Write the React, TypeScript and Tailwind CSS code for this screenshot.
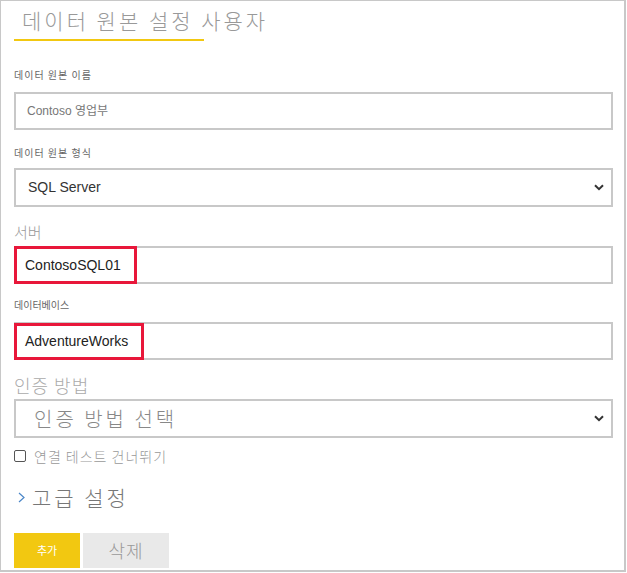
import React from 'react';

const ko = { fontFamily: '"Noto Sans CJK KR", "Noto Sans", sans-serif' };
const latin = { fontFamily: '"Liberation Sans", "Noto Sans CJK KR", sans-serif' };

function Chevron() {
  return (
    <svg width="10" height="7" viewBox="0 0 10 7" className="shrink-0">
      <path d="M1 1.2 L5 5.2 L9 1.2" fill="none" stroke="#333" strokeWidth="2" />
    </svg>
  );
}

export default function App() {
  return (
    <div className="w-[627px] h-[573px] bg-white">
      <div className="w-[626px] h-[572px] border border-[#c8c8c8] border-r-2 border-b-2 pl-[13px] pr-[11px]" style={ko}>
        {/* Title */}
        <div className="h-[38px] pl-[8px] pt-[3px] text-[21px] leading-[32px] tracking-[3px] text-[#999] font-light">
          데이터 원본 설정 사용자
        </div>
        <div className="h-[2px] w-[190px] bg-[#f2c811]"></div>

        {/* Data source name */}
        <div className="pt-[28px] mb-[11px] text-[10px] leading-[12px] tracking-[1px] text-[#666]">데이터 원본 이름</div>
        <div className="h-[38px] border-2 border-[#c8c8c8] flex items-center pl-[11px] text-[12px] text-[#777]" style={latin}>
          Contoso 영업부
        </div>

        {/* Data source type */}
        <div className="pt-[17px] mb-[9px] text-[10px] leading-[12px] tracking-[1px] text-[#666]">데이터 원본 형식</div>
        <div className="h-[39px] border-2 border-[#c8c8c8] flex items-center justify-between pl-[12px] pr-[7px] text-[14px] text-[#333]" style={latin}>
          <span>SQL Server</span>
          <Chevron />
        </div>

        {/* Server */}
        <div className="pt-[15px] mb-[4px] text-[15px] leading-[20px] text-[#999] font-light">서버</div>
        <div className="relative h-[38px] border-2 border-[#c8c8c8] flex items-center pl-[9px] text-[14px] text-[#222]" style={latin}>
          ContosoSQL01
          <div className="absolute left-[-2px] top-[-2px] w-[123px] h-[38px] border-[3px] border-[#e8173a]"></div>
        </div>

        {/* Database */}
        <div className="pt-[15px] mb-[11px] text-[10px] leading-[12px] text-[#666]">데이터베이스</div>
        <div className="relative h-[38px] border-2 border-[#c8c8c8] flex items-center pl-[9px] text-[14px] text-[#222]" style={latin}>
          AdventureWorks
          <div className="absolute left-[-2px] top-[-1px] w-[130px] h-[37px] border-[3px] border-[#e8173a]"></div>
        </div>

        {/* Auth method */}
        <div className="pt-[13px] mb-[2px] text-[18px] leading-[24px] tracking-[1px] text-[#aaa] font-light">인증 방법</div>
        <div className="h-[39px] border-2 border-[#c8c8c8] flex items-center justify-between pl-[18px] pr-[7px] text-[20px] tracking-[3px] text-[#888] font-light">
          <span>인증 방법 선택</span>
          <Chevron />
        </div>

        {/* Skip test */}
        <div className="mt-[9px] h-[18px] flex items-center gap-[8px] text-[14px] tracking-[1px] text-[#999] font-light">
          <span className="w-[12px] h-[12px] border border-[#555] rounded-[2px] shrink-0"></span>
          <span>연결 테스트 건너뛰기</span>
        </div>

        {/* Advanced */}
        <div className="mt-[18px] h-[30px] flex items-center text-[21px] tracking-[3px] text-[#777] font-light">
          <svg width="14" height="14" viewBox="0 0 14 14" className="shrink-0 ml-[3px] mr-[1px]">
            <path d="M2 2 L7 6.5 L2 11" fill="none" stroke="#4a86c8" strokeWidth="1.2" />
          </svg>
          <span>고급 설정</span>
        </div>

        {/* Buttons */}
        <div className="mt-[20px] flex gap-[3px]">
          <div className="w-[66px] h-[35px] bg-[#f2c811] flex items-center justify-center text-[11px] text-white">추가</div>
          <div className="w-[86px] h-[35px] bg-[#e9e9e9] flex items-center justify-center text-[18px] text-[#999] font-light tracking-[1px]">삭제</div>
        </div>
      </div>
    </div>
  );
}
